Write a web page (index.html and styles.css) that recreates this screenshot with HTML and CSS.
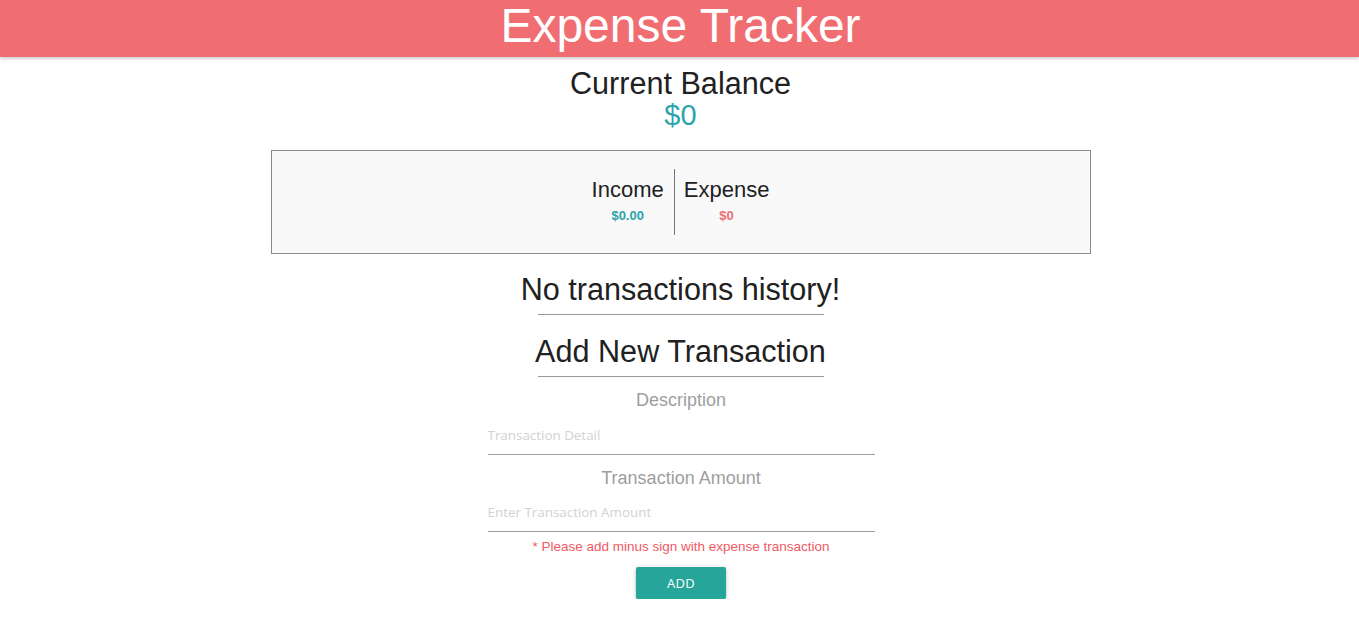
FILE: index.html
```html
<!DOCTYPE html>
<html lang="en">
<head>
<meta charset="utf-8">
<title>Expense Tracker</title>
<link rel="stylesheet" href="styles.css">
</head>
<body>
<header class="topbar">
  <h1 class="title">Expense Tracker</h1>
</header>
<main class="main">
  <section class="balance">
    <h2 class="balance-label">Current Balance</h2>
    <div class="balance-value">$0</div>
  </section>
  <section class="summary">
    <div class="summary-col summary-income">
      <div class="summary-name">Income</div>
      <div class="summary-amount income">$0.00</div>
    </div>
    <div class="summary-col summary-expense">
      <div class="summary-name">Expense</div>
      <div class="summary-amount expense">$0</div>
    </div>
  </section>
  <h2 class="section-title first">No transactions history!</h2>
  <hr class="rule">
  <h2 class="section-title second">Add New Transaction</h2>
  <hr class="rule rule-second">
  <form class="form">
    <label class="field-label label-desc" for="desc">Description</label>
    <input class="field-input" id="desc" type="text" placeholder="Transaction Detail">
    <label class="field-label label-amt" for="amt">Transaction Amount</label>
    <input class="field-input input-amt" id="amt" type="text" placeholder="Enter Transaction Amount">
    <p class="hint">* Please add minus sign with expense transaction</p>
    <button class="btn" type="button">ADD</button>
  </form>
</main>
</body>
</html>
```
FILE: styles.css
```css
html, body {
  margin: 0;
  padding: 0;
  background: #ffffff;
}
body {
  font-family: "Liberation Sans", Arial, sans-serif;
  color: #212121;
}
.topbar {
  background: #f06e72;
  height: 57px;
  box-shadow: 0 2px 3px rgba(0, 0, 0, 0.18);
  text-align: center;
}
.title {
  margin: 0;
  padding-left: 2px;
  font-size: 48px;
  font-weight: 400;
  line-height: 51px;
  color: #ffffff;
}
.main {
  padding-left: 2px;
  display: flex;
  flex-direction: column;
  align-items: center;
}
.balance {
  text-align: center;
  margin-top: 10px;
}
.balance-label {
  margin: 0;
  font-size: 30.6px;
  font-weight: 400;
  line-height: 32px;
}
.balance-value {
  font-size: 29px;
  line-height: 30px;
  margin-top: 1px;
  color: #2ba4ad;
}
.summary {
  margin-top: 20px;
  box-sizing: border-box;
  width: 820px;
  border: 1px solid #8a8a8a;
  background: #f9f9f9;
  padding: 18px 0;
  display: flex;
  justify-content: center;
}
.summary-col {
  text-align: center;
  padding-top: 8px;
  padding-bottom: 11px;
}
.summary-income {
  padding-right: 10px;
  border-right: 1px solid #777;
}
.summary-expense {
  padding-left: 9px;
}
.summary-name {
  font-size: 22px;
  line-height: 26px;
}
.summary-amount {
  margin-top: 5px;
  font-size: 13px;
  font-weight: 700;
  line-height: 16px;
}
.income { color: #2ba4ad; }
.expense { color: #f06e72; }
.section-title {
  margin: 18px 0 0;
  font-size: 30.6px;
  font-weight: 400;
  line-height: 34px;
  text-align: center;
}
.section-title.second {
  margin-top: 19px;
}
.rule {
  margin: 8px 0 0;
  width: 286px;
  height: 1px;
  border: 0;
  background: #9a9a9a;
}
.rule-second {
  margin-top: 8px;
}
.form {
  width: 387px;
  padding-left: 1px;
  display: flex;
  flex-direction: column;
  align-items: center;
}
.field-label {
  display: block;
  font-size: 18px;
  line-height: 22px;
  color: #9e9e9e;
}
.label-desc { margin-top: 12px; }
.label-amt { margin-top: 12px; }
.field-input {
  box-sizing: border-box;
  width: 100%;
  height: 31px;
  margin: 13px 0 0;
  padding: 0 0 8px 0;
  border: 0;
  border-bottom: 1px solid #9e9e9e;
  background: transparent;
  font-family: "Open Sans", "Noto Sans", sans-serif;
  font-size: 13.4px;
  line-height: 22px;
  color: #333;
  outline: none;
}
.input-amt {
  margin-top: 12px;
}
.field-input::placeholder {
  color: #d2d2d2;
  opacity: 1;
}
.hint {
  margin: 6px 0 0;
  font-size: 13.5px;
  line-height: 18px;
  color: #ee5a65;
  text-align: center;
}
.btn {
  margin-top: 11px;
  width: 90px;
  height: 32px;
  border: 0;
  border-radius: 2px;
  background: #26a69a;
  color: #ffffff;
  font-family: "Open Sans", "Noto Sans", sans-serif;
  font-size: 13px;
  letter-spacing: 0.3px;
  box-shadow: 0 2px 2px rgba(0, 0, 0, 0.14), 0 3px 1px -2px rgba(0, 0, 0, 0.12), 0 1px 5px rgba(0, 0, 0, 0.2);
  cursor: pointer;
}
```
